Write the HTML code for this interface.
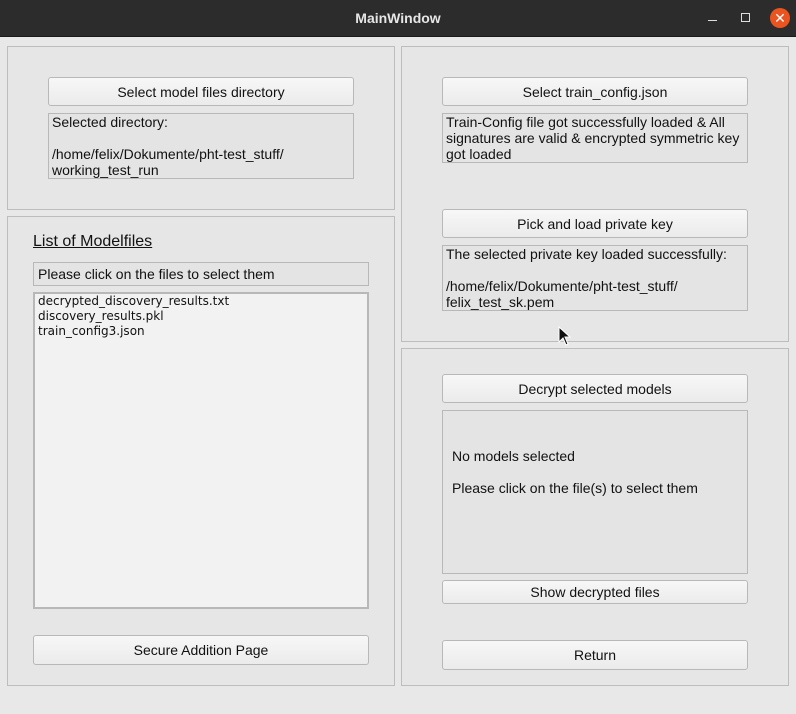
<!DOCTYPE html>
<html><head><style>
body{margin:0;width:796px;height:714px;background:#e8e8e8;font-family:"Liberation Sans",sans-serif;font-size:14px;color:#111;position:relative;overflow:hidden}
.a{position:absolute;box-sizing:border-box}
.title{left:0;top:0;width:796px;height:37px;background:#2c2c2c;border-bottom:1px solid #1a1a1a;color:#e6e6e6;font-weight:bold;font-size:14px;text-align:center;line-height:37px}
.panel{border:1px solid #bdbdbd;background:#e6e6e6}
.btn{border:1px solid #b8b8b8;border-radius:3px;background:linear-gradient(#f7f7f7,#ebebeb);text-align:center;line-height:29px}
.box{border:1px solid #b8b8b8;background:#e4e4e4;padding:0 3px;line-height:16px}
</style></head><body>
<div class="a title">MainWindow</div>
<div class="a" style="left:708px;top:20px;width:9px;height:1px;background:#ddd"></div>
<div class="a" style="left:741px;top:13px;width:9px;height:9px;border:1.5px solid #ddd"></div>
<div class="a" style="left:770px;top:8px;width:20px;height:20px;border-radius:50%;background:#e95420;color:#fff;text-align:center;line-height:20px;font-size:14px">✕</div>

<div class="a panel" style="left:7px;top:46px;width:388px;height:164px"></div>
<div class="a btn" style="left:48px;top:77px;width:306px;height:29px">Select model files directory</div>
<div class="a box" style="left:48px;top:113px;width:306px;height:66px">Selected directory:<br><br>/home/felix/Dokumente/pht-test_stuff/<br>working_test_run</div>

<div class="a panel" style="left:7px;top:216px;width:388px;height:470px"></div>
<div class="a" style="left:33px;top:233px;font-size:16px;text-decoration:underline">List of Modelfiles</div>
<div class="a box" style="left:33px;top:262px;width:336px;height:24px;line-height:22px;padding-left:4px">Please click on the files to select them</div>
<div class="a" style="left:33px;top:292px;width:336px;height:317px;border:2px solid #b8b8b8;background:#f2f2f2;font-family:'DejaVu Sans',sans-serif;font-size:12px;line-height:15px;padding:0 3px">decrypted_discovery_results.txt<br>discovery_results.pkl<br>train_config3.json</div>
<div class="a btn" style="left:33px;top:635px;width:336px;height:30px">Secure Addition Page</div>

<div class="a panel" style="left:401px;top:46px;width:388px;height:296px"></div>
<div class="a btn" style="left:442px;top:77px;width:306px;height:29px">Select train_config.json</div>
<div class="a box" style="left:442px;top:113px;width:306px;height:50px">Train-Config file got successfully loaded &amp; All signatures are valid &amp; encrypted symmetric key got loaded</div>
<div class="a btn" style="left:442px;top:209px;width:306px;height:29px">Pick and load private key</div>
<div class="a box" style="left:442px;top:245px;width:306px;height:66px">The selected private key loaded successfully:<br><br>/home/felix/Dokumente/pht-test_stuff/<br>felix_test_sk.pem</div>

<div class="a panel" style="left:401px;top:348px;width:388px;height:338px"></div>
<div class="a btn" style="left:442px;top:374px;width:306px;height:29px">Decrypt selected models</div>
<div class="a box" style="left:442px;top:410px;width:306px;height:164px;padding:37px 9px;line-height:16px">No models selected<br><div style="height:16px"></div>Please click on the file(s) to select them</div>
<div class="a btn" style="left:442px;top:580px;width:306px;height:24px;line-height:23px">Show decrypted files</div>
<div class="a btn" style="left:442px;top:640px;width:306px;height:30px">Return</div>
<svg class="a" style="left:558px;top:326px" width="14" height="20"><path d="M1 1L1 16L5 12L8 19L10 18L7 11L12 11Z" fill="#111" stroke="#fff" stroke-width="1"/></svg>
</body></html>
